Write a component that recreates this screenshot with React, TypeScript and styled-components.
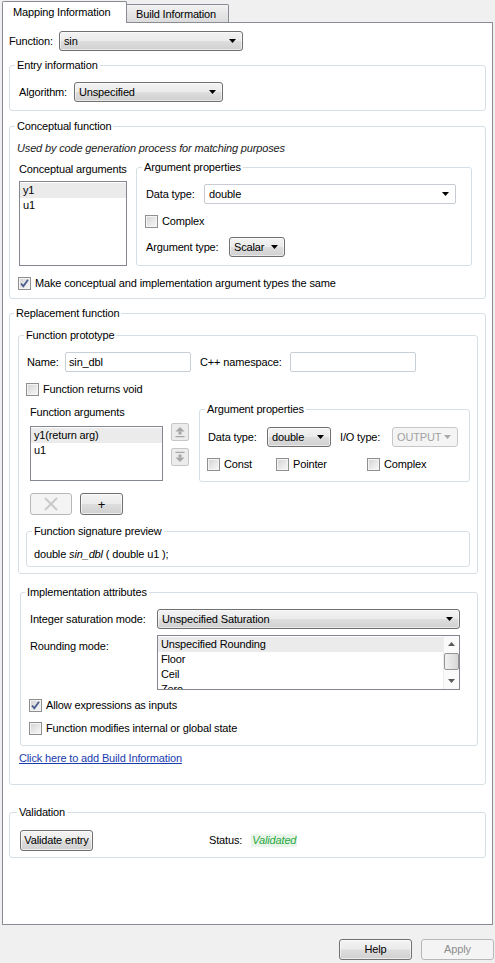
import React from "react";
import styled, { createGlobalStyle, css } from "styled-components";

const GlobalStyle = createGlobalStyle`
  html, body { margin: 0; padding: 0; background: #f0f0f0; }
  body {
    font-family: "Liberation Sans", Arial, sans-serif;
    font-size: 11px;
    line-height: 13px;
    letter-spacing: -0.15px;
    color: #000;
  }
  *, *::before, *::after { box-sizing: border-box; }
`;

const Window = styled.div`
  width: 495px;
  height: 963px;
  background: #f0f0f0;
  display: flex;
  flex-direction: column;
  overflow: hidden;
`;

const TabBar = styled.div`
  display: flex;
  align-items: flex-end;
  height: 22px;
  padding-left: 2px;
  position: relative;
  z-index: 2;
  flex: none;
`;

const Tab = styled.div<{ $active?: boolean; $w: number }>`
  width: ${(p) => p.$w}px;
  border: 1px solid #898c95;
  border-bottom: none;
  white-space: nowrap;
  ${(p) =>
    p.$active
      ? css`
          height: 22px;
          margin-bottom: -1px;
          background: #fff;
          border-radius: 2px 2px 0 0;
          padding: 4px 0 0 10px;
        `
      : css`
          height: 18px;
          border-left: none;
          border-radius: 0 2px 0 0;
          background: linear-gradient(#f3f3f3, #e6e6e6 50%, #dcdcdc);
          padding: 3px 0 0 9px;
        `}
`;

const Panel = styled.div`
  margin: 0 2px;
  height: 903px;
  flex: none;
  border: 1px solid #898c95;
  background: #fff;
  padding: 8px 6px 0 6px;
  display: flex;
  flex-direction: column;
  position: relative;
  z-index: 1;
`;

const Group = styled.fieldset<{ $pad: string; $mt?: number; $ml?: number; $grow?: boolean }>`
  margin: ${(p) => p.$mt ?? 0}px 0 0 ${(p) => p.$ml ?? 0}px;
  padding: ${(p) => p.$pad};
  border: 1px solid #d5dfe5;
  border-radius: 3px;
  min-width: 0;
  ${(p) =>
    p.$grow &&
    css`
      flex: 1;
    `}
`;

const Legend = styled.legend<{ $ml: number }>`
  padding: 0 2px;
  margin-left: ${(p) => p.$ml}px;
  line-height: 13px;
`;

const Row = styled.div<{ $mt?: number; $ml?: number; $align?: string }>`
  display: flex;
  align-items: ${(p) => p.$align ?? "center"};
  margin-top: ${(p) => p.$mt ?? 0}px;
  margin-left: ${(p) => p.$ml ?? 0}px;
`;

const Column = styled.div<{ $w?: number; $ml?: number; $mt?: number }>`
  display: flex;
  flex-direction: column;
  flex: none;
  ${(p) => p.$w !== undefined && css`width: ${p.$w}px;`}
  margin-left: ${(p) => p.$ml ?? 0}px;
  margin-top: ${(p) => p.$mt ?? 0}px;
`;

const Label = styled.span<{ $w?: number; $ml?: number; $mt?: number }>`
  flex: none;
  white-space: nowrap;
  ${(p) => p.$w !== undefined && css`width: ${p.$w}px;`}
  margin-left: ${(p) => p.$ml ?? 0}px;
  margin-top: ${(p) => p.$mt ?? 0}px;
`;

const Note = styled.div<{ $ml?: number }>`
  font-style: italic;
  color: #1c1c1c;
  white-space: nowrap;
  margin-left: ${(p) => p.$ml ?? 0}px;
`;

type SelectKind = "button" | "edit" | "disabled";

const SelectBox = styled.div<{ $w?: number; $kind?: SelectKind }>`
  height: 20px;
  ${(p) => (p.$w !== undefined ? css`width: ${p.$w}px; flex: none;` : css`flex: 1; min-width: 0;`)}
  display: flex;
  align-items: center;
  justify-content: space-between;
  padding: 0 6px 0 4px;
  border-radius: 3px;
  white-space: nowrap;
  ${(p) =>
    p.$kind === "edit"
      ? css`
          border: 1px solid #c7ccd2;
          border-radius: 2px;
          background: #fff;
        `
      : p.$kind === "disabled"
      ? css`
          border: 1px solid #c5c7c9;
          background: #f4f4f4;
          color: #a2a2a2;
        `
      : css`
          border: 1px solid #707070;
          background: linear-gradient(#f3f3f3 0%, #ebebeb 48%, #dddddd 52%, #d0d0d0 100%);
          box-shadow: inset 0 0 0 1px rgba(255, 255, 255, 0.55);
        `}
`;

const Arrow = ({ color = "#000" }: { color?: string }) => (
  <svg width="7" height="4" viewBox="0 0 7 4" style={{ flex: "none" }}>
    <polygon points="0,0 7,0 3.5,4" fill={color} />
  </svg>
);

const Select = ({ value, w, kind = "button" }: { value: string; w?: number; kind?: SelectKind }) => (
  <SelectBox $w={w} $kind={kind}>
    <span>{value}</span>
    <Arrow color={kind === "disabled" ? "#a8a8a8" : "#000"} />
  </SelectBox>
);

const TextField = styled.div<{ $w: number }>`
  width: ${(p) => p.$w}px;
  height: 20px;
  flex: none;
  border: 1px solid #c9cfd6;
  border-radius: 2px;
  background: #fff;
  padding: 0 3px;
  display: flex;
  align-items: center;
`;

const CheckLabel = styled.div<{ $mt?: number; $ml?: number; $w?: number }>`
  display: flex;
  align-items: center;
  gap: 4px;
  height: 13px;
  flex: none;
  white-space: nowrap;
  margin-top: ${(p) => p.$mt ?? 0}px;
  margin-left: ${(p) => p.$ml ?? 0}px;
  ${(p) => p.$w !== undefined && css`width: ${p.$w}px;`}
`;

const Box = styled.span`
  width: 13px;
  height: 13px;
  flex: none;
  border: 1px solid #8e8f8f;
  background: linear-gradient(135deg, #d2d2d2 0%, #e8e8e8 55%, #f8f8f8 100%);
  box-shadow: inset 0 0 0 1px #f4f4f4;
  display: flex;
  align-items: center;
  justify-content: center;
`;

const Check = ({
  label,
  checked,
  mt,
  ml,
  w,
}: {
  label: string;
  checked?: boolean;
  mt?: number;
  ml?: number;
  w?: number;
}) => (
  <CheckLabel $mt={mt} $ml={ml} $w={w}>
    <Box>
      {checked && (
        <svg width="11" height="11" viewBox="0 0 11 11">
          <path d="M2 5.5 L4.3 8.2 L9 1.8" stroke="#4a5d8f" strokeWidth="1.8" fill="none" />
        </svg>
      )}
    </Box>
    <span>{label}</span>
  </CheckLabel>
);

const ListBox = styled.div<{ $w?: number; $h: number; $mt?: number }>`
  ${(p) => (p.$w !== undefined ? css`width: ${p.$w}px; flex: none;` : css`flex: 1; min-width: 0;`)}
  height: ${(p) => p.$h}px;
  margin-top: ${(p) => p.$mt ?? 0}px;
  border: 1px solid #828790;
  background: #fff;
  display: flex;
  overflow: hidden;
`;

const ListItems = styled.div`
  flex: 1;
  padding-top: 1px;
  overflow: hidden;
`;

const ListItem = styled.div<{ $sel?: boolean }>`
  height: 15px;
  line-height: 15px;
  padding-left: 3px;
  white-space: nowrap;
  background: ${(p) => (p.$sel ? "#ebebeb" : "transparent")};
`;

const ScrollBar = styled.div`
  width: 16px;
  flex: none;
  background: #fafafa;
  border-left: 1px solid #eeeeee;
  display: flex;
  flex-direction: column;
  align-items: center;
`;

const ScrollArrow = styled.div`
  height: 16px;
  width: 100%;
  display: flex;
  align-items: center;
  justify-content: center;
`;

const ScrollThumb = styled.div`
  width: 15px;
  height: 17px;
  margin-top: 1px;
  border: 1px solid #959595;
  border-radius: 2px;
  background: linear-gradient(90deg, #f1f1f1, #e2e2e2 60%, #d6d6d6);
`;

const Spacer = styled.div`
  flex: 1;
`;

const SmallTri = ({ up }: { up?: boolean }) => (
  <svg width="7" height="4" viewBox="0 0 7 4">
    <polygon points={up ? "0,4 7,4 3.5,0" : "0,0 7,0 3.5,4"} fill="#5a5a5a" />
  </svg>
);

const MoveButton = styled.div<{ $mt?: number }>`
  width: 18px;
  height: 18px;
  margin-top: ${(p) => p.$mt ?? 0}px;
  border: 1px solid #c4c7ca;
  border-radius: 2px;
  background: #ececec;
  display: flex;
  align-items: center;
  justify-content: center;
`;

const MoveIcon = ({ up }: { up?: boolean }) => (
  <svg width="12" height="12" viewBox="0 0 12 12">
    {up ? (
      <>
        <polygon points="6,1 10.5,5.5 1.5,5.5" fill="#a6a6a6" />
        <rect x="4.5" y="5.5" width="3" height="3" fill="#a6a6a6" />
        <rect x="1.5" y="10" width="9" height="1.2" fill="#a6a6a6" />
      </>
    ) : (
      <>
        <rect x="1.5" y="0.8" width="9" height="1.2" fill="#a6a6a6" />
        <rect x="4.5" y="3.5" width="3" height="3" fill="#a6a6a6" />
        <polygon points="6,11 10.5,6.5 1.5,6.5" fill="#a6a6a6" />
      </>
    )}
  </svg>
);

const PushButton = styled.button<{ $w: number; $h?: number; $ml?: number }>`
  font: inherit;
  letter-spacing: inherit;
  width: ${(p) => p.$w}px;
  height: ${(p) => p.$h ?? 21}px;
  margin: 0 0 0 ${(p) => p.$ml ?? 0}px;
  padding: 0;
  flex: none;
  border: 1px solid #707070;
  border-radius: 3px;
  color: #000;
  background: linear-gradient(#f3f3f3 0%, #ebebeb 48%, #dddddd 52%, #d0d0d0 100%);
  box-shadow: inset 0 0 0 1px rgba(255, 255, 255, 0.6);
  display: flex;
  align-items: center;
  justify-content: center;
  &:disabled {
    border-color: #b5b8bb;
    background: #f4f4f4;
    color: #8d8d8d;
    box-shadow: none;
  }
`;

const PlusGlyph = styled.span`
  font-size: 13px;
  line-height: 13px;
`;

const Link = styled.a<{ $mt?: number; $ml?: number }>`
  display: block;
  color: #1b3caf;
  text-decoration: underline;
  margin-top: ${(p) => p.$mt ?? 0}px;
  margin-left: ${(p) => p.$ml ?? 0}px;
  white-space: nowrap;
  align-self: flex-start;
`;

const StatusValue = styled.span`
  font-style: italic;
  color: #27a83c;
  background: #e9f4ea;
  padding: 0 1px;
  margin-left: 9px;
`;

const Signature = styled.div`
  white-space: nowrap;
  em {
    font-style: italic;
  }
`;

const Footer = styled.div`
  display: flex;
  justify-content: flex-end;
  gap: 9px;
  padding: 14px 1px 0 0;
`;

export default function App() {
  return (
    <Window>
      <GlobalStyle />
      <TabBar>
        <Tab $active $w={125}>Mapping Information</Tab>
        <Tab $w={102}>Build Information</Tab>
      </TabBar>
      <Panel>
        <Row>
          <Label $w={50}>Function:</Label>
          <Select value="sin" w={184} />
        </Row>

        <Group $pad="10px 9px 8px 9px" $mt={8}>
          <Legend $ml={-4}>Entry information</Legend>
          <Row>
            <Label $w={55}>Algorithm:</Label>
            <Select value="Unspecified" w={149} />
          </Row>
        </Group>

        <Group $pad="9px 13px 8px 8px" $mt={9}>
          <Legend $ml={-3}>Conceptual function</Legend>
          <Note $ml={-1}>Used by code generation process for matching purposes</Note>
          <Row $mt={6} $align="flex-start">
            <Column $w={108} $ml={1}>
              <Label $mt={2}>Conceptual arguments</Label>
              <ListBox $w={108} $h={85} $mt={5}>
                <ListItems>
                  <ListItem $sel>y1</ListItem>
                  <ListItem>u1</ListItem>
                </ListItems>
              </ListBox>
            </Column>
            <Group $pad="10px 15px 8px 9px" $ml={9} $grow>
              <Legend $ml={-4}>Argument properties</Legend>
              <Row>
                <Label $w={58}>Data type:</Label>
                <Select value="double" kind="edit" />
              </Row>
              <Check label="Complex" mt={11} ml={-1} />
              <Row $mt={9}>
                <Label $w={83}>Argument type:</Label>
                <Select value="Scalar" w={56} />
              </Row>
            </Group>
          </Row>
          <Check label="Make conceptual and implementation argument types the same" checked mt={11} />
        </Group>

        <Group $pad="9px 7px 19px 8px" $mt={8}>
          <Legend $ml={-4}>Replacement function</Legend>
          <Group $pad="10px 7px 6px 7px">
            <Legend $ml={-2}>Function prototype</Legend>
            <Row $ml={1}>
              <Label $w={38}>Name:</Label>
              <TextField $w={126}>sin_dbl</TextField>
              <Label $w={90} $ml={9}>C++ namespace:</Label>
              <TextField $w={126} />
            </Row>
            <Check label="Function returns void" mt={11} />
            <Row $mt={7} $ml={4} $align="flex-start">
              <Column $w={133}>
                <Label $mt={3}>Function arguments</Label>
                <ListBox $w={133} $h={55} $mt={7}>
                  <ListItems>
                    <ListItem $sel>y1(return arg)</ListItem>
                    <ListItem>u1</ListItem>
                  </ListItems>
                </ListBox>
              </Column>
              <Column $ml={8} $mt={20}>
                <MoveButton>
                  <MoveIcon up />
                </MoveButton>
                <MoveButton $mt={7}>
                  <MoveIcon />
                </MoveButton>
              </Column>
              <Group $pad="11px 7px 10px 8px" $ml={10} $grow>
                <Legend $ml={-3}>Argument properties</Legend>
                <Row>
                  <Label $w={59}>Data type:</Label>
                  <Select value="double" w={64} />
                  <Label $w={52} $ml={9}>I/O type:</Label>
                  <Select value="OUTPUT" w={66} kind="disabled" />
                </Row>
                <Row $mt={11} $ml={-1}>
                  <Check label="Const" w={69} />
                  <Check label="Pointer" w={91} />
                  <Check label="Complex" />
                </Row>
              </Group>
            </Row>
            <Row $mt={11} $ml={4}>
              <PushButton $w={42} $h={22} disabled>
                <svg width="16" height="14" viewBox="0 0 16 14">
                  <path d="M2 1 L14 13 M14 1 L2 13" stroke="#c9c9c9" strokeWidth="2" />
                </svg>
              </PushButton>
              <PushButton $w={43} $h={22} $ml={8}>
                <PlusGlyph>+</PlusGlyph>
              </PushButton>
            </Row>
            <Group $pad="10px 7px 5px 7px" $mt={10}>
              <Legend $ml={-2}>Function signature preview</Legend>
              <Signature>
                double <em>sin_dbl</em> ( double u1 );
              </Signature>
            </Group>
          </Group>

          <Group $pad="10px 17px 10px 9px" $mt={12} $ml={2}>
            <Legend $ml={-5}>Implementation attributes</Legend>
            <Row>
              <Label $w={127}>Integer saturation mode:</Label>
              <Select value="Unspecified Saturation" />
            </Row>
            <Row $mt={6} $align="flex-start">
              <Label $w={127} $mt={5}>
                Rounding mode:
              </Label>
              <ListBox $h={55}>
                <ListItems>
                  <ListItem $sel>Unspecified Rounding</ListItem>
                  <ListItem>Floor</ListItem>
                  <ListItem>Ceil</ListItem>
                  <ListItem>Zero</ListItem>
                </ListItems>
                <ScrollBar>
                  <ScrollArrow>
                    <SmallTri up />
                  </ScrollArrow>
                  <ScrollThumb />
                  <Spacer />
                  <ScrollArrow>
                    <SmallTri />
                  </ScrollArrow>
                </ScrollBar>
              </ListBox>
            </Row>
            <Check label="Allow expressions as inputs" checked mt={9} ml={-1} />
            <Check label="Function modifies internal or global state" mt={10} ml={-1} />
          </Group>
          <Link href="#" $mt={6} $ml={1}>
            Click here to add Build Information
          </Link>
        </Group>

        <Group $pad="11px 9px 6px 10px" $mt={21}>
          <Legend $ml={-3}>Validation</Legend>
          <Row>
            <PushButton $w={73}>Validate entry</PushButton>
            <Label $ml={116}>Status:</Label>
            <StatusValue>Validated</StatusValue>
          </Row>
        </Group>
      </Panel>
      <Footer>
        <PushButton $w={73}>Help</PushButton>
        <PushButton $w={73} disabled>
          Apply
        </PushButton>
      </Footer>
    </Window>
  );
}
